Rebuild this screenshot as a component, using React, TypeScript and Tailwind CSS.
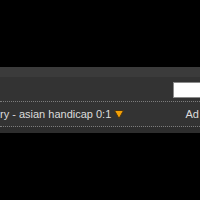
export default function App() {
  return (
    <div className="h-[200px] w-[200px] overflow-hidden bg-black font-['Liberation_Sans',Arial,sans-serif]">
      <div className="h-[67px]" />
      <div className="bg-[#333333]">
        <div className="h-[10px] bg-[#3b3b3b]" />
        <div className="flex h-[24px] items-start justify-end pt-[5px]">
          <div className="mr-[-4px] h-[16px] w-[31px] shrink-0 border border-[#8a8a8a] bg-white" />
        </div>
        <div className="flex h-[26px] items-center justify-between border-y border-dotted border-[#7c7c7c] text-[11px] text-[#dcdcdc]">
          <div className="flex items-center gap-[3px] whitespace-nowrap">
            <span>ry - asian handicap 0:1</span>
            <svg width="10" height="9" viewBox="0 0 10 9" className="mt-[1px]">
              <polygon points="0.5,0.5 9.5,0.5 5,8.5" fill="#f4a006" stroke="#4a3512" strokeWidth="1" />
            </svg>
          </div>
          <span className="mr-[1px] whitespace-nowrap">Ad</span>
        </div>
        <div className="h-[6px] bg-[#2d2d2d]" />
      </div>
    </div>
  );
}
